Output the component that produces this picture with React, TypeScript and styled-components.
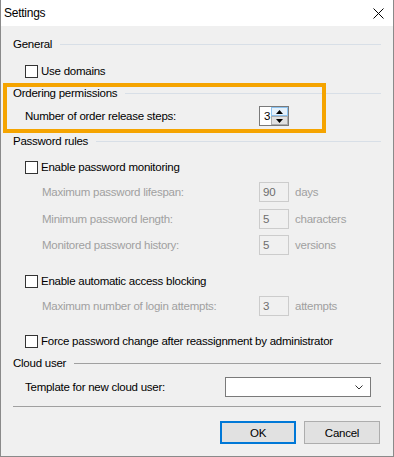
import React from "react";
import styled, { createGlobalStyle } from "styled-components";

const Global = createGlobalStyle`
  html, body { margin: 0; padding: 0; background: #f0f0f0; }
  body {
    font-family: "Liberation Sans", Arial, sans-serif;
    font-size: 11.5px;
    letter-spacing: -0.25px;
    color: #000;
  }
  * { box-sizing: border-box; }
`;

const Window = styled.div`
  width: 394px;
  height: 457px;
  display: flex;
  flex-direction: column;
  background: #f0f0f0;
  border-left: 1px solid #8a8a8a;
  border-right: 1px solid #8a8a8a;
  border-bottom: 1px solid #8a8a8a;
`;

const TitleBar = styled.div`
  height: 26px;
  flex: none;
  background: #fff;
  display: flex;
  align-items: center;
  padding-left: 3px;
  padding-right: 9px;
`;

const Title = styled.span`
  font-size: 12px;
  color: #000;
`;

const CloseButton = styled.div`
  margin-left: auto;
  width: 11px;
  height: 11px;
  display: flex;
`;

const Body = styled.div`
  flex: 1;
  display: flex;
  flex-direction: column;
  padding: 0 12px;
`;

const GroupHeader = styled.div<{ $mt: number; $line?: string }>`
  margin-top: ${(p) => p.$mt}px;
  height: 16px;
  display: flex;
  align-items: center;
  gap: 8px;
  &::after {
    content: "";
    flex: 1;
    height: 1px;
    background: ${(p) => p.$line ?? "#d8dfe7"};
  }
`;

const CheckRow = styled.label<{ $mt: number }>`
  margin-top: ${(p) => p.$mt}px;
  margin-left: 12px;
  height: 16px;
  display: flex;
  align-items: center;
  gap: 3px;
`;

const CheckBox = styled.span`
  width: 13px;
  height: 13px;
  border: 1px solid #333;
  background: #fff;
  flex: none;
`;

const FieldRow = styled.div<{ $mt: number; $indent: number; $disabled?: boolean }>`
  margin-top: ${(p) => p.$mt}px;
  height: 20px;
  display: grid;
  grid-template-columns: ${(p) => 240 - p.$indent}px 30px auto;
  column-gap: 6px;
  align-items: center;
  padding-left: ${(p) => p.$indent}px;
  color: ${(p) => (p.$disabled ? "#a0a0a0" : "#000")};
`;

const DisabledInput = styled.div`
  height: 20px;
  border: 1px solid #cccccc;
  background: #f0f0f0;
  color: #6d6d6d;
  padding-left: 3px;
  display: flex;
  align-items: center;
`;

const Section = styled.div`
  position: relative;
  display: flex;
  flex-direction: column;
`;

const Highlight = styled.div`
  position: absolute;
  left: -10px;
  top: -2px;
  width: 323px;
  height: 50px;
  border: 4px solid #f5a400;
  pointer-events: none;
`;

const Spinner = styled.div`
  height: 20px;
  border: 1px solid #7a7a7a;
  background: #fff;
  display: flex;
  align-items: center;
  padding-left: 4px;
`;

const SpinValue = styled.span`
  flex: 1;
`;

const SpinButtons = styled.div`
  width: 17px;
  height: 18px;
  display: flex;
  flex-direction: column;
`;

const SpinButton = styled.div<{ $hot?: boolean }>`
  flex: 1;
  border: 1px solid ${(p) => (p.$hot ? "#8cc2ef" : "#adadad")};
  background: ${(p) => (p.$hot ? "#e5f1fb" : "#e1e1e1")};
  display: flex;
  align-items: center;
  justify-content: center;
`;

const ComboRow = styled.div<{ $mt: number }>`
  margin-top: ${(p) => p.$mt}px;
  height: 20px;
  margin-left: 12px;
  display: grid;
  grid-template-columns: 200px 146px;
  align-items: center;
`;

const Combo = styled.div`
  height: 20px;
  border: 1px solid #7a7a7a;
  background: #fff;
  display: flex;
  align-items: center;
  justify-content: flex-end;
  padding-right: 7px;
`;

const Separator = styled.div<{ $mt: number }>`
  margin-top: ${(p) => p.$mt}px;
  height: 1px;
  background: #a0a0a0;
`;

const ButtonRow = styled.div<{ $mt: number }>`
  margin-top: ${(p) => p.$mt}px;
  display: flex;
  justify-content: flex-end;
  gap: 8px;
  padding-right: 1px;
`;

const Button = styled.button<{ $default?: boolean }>`
  width: 76px;
  height: 23px;
  font: inherit;
  letter-spacing: inherit;
  color: #000;
  background: #e1e1e1;
  border: ${(p) => (p.$default ? "2px solid #0078d7" : "1px solid #adadad")};
  padding: 0;
`;

const Arrow = ({ up }: { up?: boolean }) => (
  <svg width="7" height="4" viewBox="0 0 7 4">
    <polygon points={up ? "0,4 7,4 3.5,0" : "0,0 7,0 3.5,4"} fill="#000" />
  </svg>
);

export default function App() {
  return (
    <>
      <Global />
      <Window>
        <TitleBar>
          <Title>Settings</Title>
          <CloseButton>
            <svg width="11" height="11" viewBox="0 0 11 11">
              <path d="M0.5 0.5 L10.5 10.5 M10.5 0.5 L0.5 10.5" stroke="#000" strokeWidth="1" />
            </svg>
          </CloseButton>
        </TitleBar>
        <Body>
          <GroupHeader $mt={10}>General</GroupHeader>
          <CheckRow $mt={11}>
            <CheckBox />
            Use domains
          </CheckRow>

          <Section style={{ marginTop: 6 }}>
            <GroupHeader $mt={0}>Ordering permissions</GroupHeader>
            <FieldRow $mt={5} $indent={12}>
              <span>Number of order release steps:</span>
              <Spinner>
                <SpinValue>3</SpinValue>
                <SpinButtons>
                  <SpinButton $hot>
                    <Arrow up />
                  </SpinButton>
                  <SpinButton>
                    <Arrow />
                  </SpinButton>
                </SpinButtons>
              </Spinner>
            </FieldRow>
            <Highlight />
          </Section>

          <GroupHeader $mt={7}>Password rules</GroupHeader>
          <CheckRow $mt={10}>
            <CheckBox />
            Enable password monitoring
          </CheckRow>
          <FieldRow $mt={7} $indent={29} $disabled>
            <span>Maximum password lifespan:</span>
            <DisabledInput>90</DisabledInput>
            <span>days</span>
          </FieldRow>
          <FieldRow $mt={7} $indent={29} $disabled>
            <span>Minimum password length:</span>
            <DisabledInput>5</DisabledInput>
            <span>characters</span>
          </FieldRow>
          <FieldRow $mt={6} $indent={29} $disabled>
            <span>Monitored password history:</span>
            <DisabledInput>5</DisabledInput>
            <span>versions</span>
          </FieldRow>

          <CheckRow $mt={18}>
            <CheckBox />
            Enable automatic access blocking
          </CheckRow>
          <FieldRow $mt={7} $indent={29} $disabled>
            <span>Maximum number of login attempts:</span>
            <DisabledInput>3</DisabledInput>
            <span>attempts</span>
          </FieldRow>

          <CheckRow $mt={17}>
            <CheckBox />
            Force password change after reassignment by administrator
          </CheckRow>

          <GroupHeader $mt={6} $line="#a0a0a0">Cloud user</GroupHeader>
          <ComboRow $mt={6}>
            <span>Template for new cloud user:</span>
            <Combo>
              <svg width="8" height="5" viewBox="0 0 8 5">
                <polyline points="0.5,0.5 4,4 7.5,0.5" fill="none" stroke="#333" strokeWidth="1" />
              </svg>
            </Combo>
          </ComboRow>

          <Separator $mt={9} />
          <ButtonRow $mt={14}>
            <Button $default>OK</Button>
            <Button>Cancel</Button>
          </ButtonRow>
        </Body>
      </Window>
    </>
  );
}
